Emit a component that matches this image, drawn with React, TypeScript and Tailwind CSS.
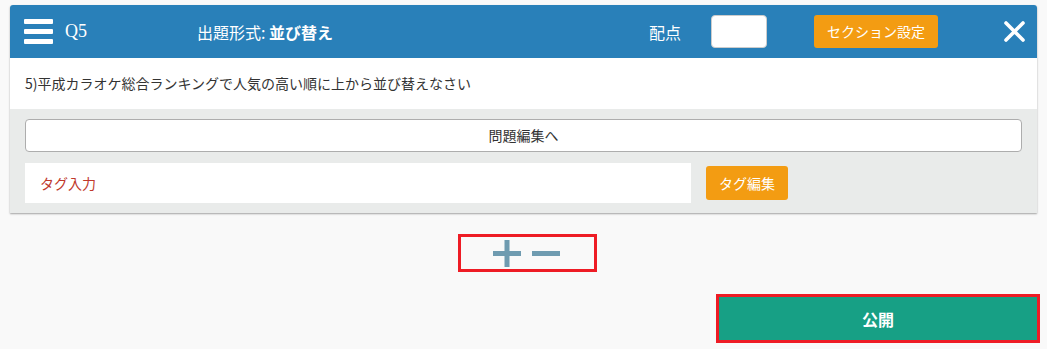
import React from "react";

const jp = "font-['Noto_Sans_CJK_JP','Noto_Sans',sans-serif]";

export default function App() {
  return (
    <div className={`min-h-[349px] w-[1047px] bg-[#f9f9f9] pt-[5px] ${jp}`}>
      <div className="mx-[10px] w-[1027px] bg-white shadow-[0_1px_2px_rgba(0,0,0,0.35)] rounded-t-[3px] overflow-hidden">
        {/* header */}
        <div className="flex h-[53px] items-center bg-[#2980b9] text-white">
          <div className="ml-[14px] flex w-[29px] flex-col gap-[5px]">
            <span className="h-[5px] rounded-[1px] bg-white" />
            <span className="h-[5px] rounded-[1px] bg-white" />
            <span className="h-[5px] rounded-[1px] bg-white" />
          </div>
          <div className="ml-[12px] w-[132px] font-['Liberation_Serif',serif] text-[18px]">Q5</div>
          <div className="w-[452px] text-[16px]">
            出題形式: <span className="font-bold">並び替え</span>
          </div>
          <div className="w-[62px] text-[16px]">配点</div>
          <div className="h-[33px] w-[56px] rounded-[4px] border border-[#ccc] bg-white" />
          <button className="ml-[47px] flex h-[33px] w-[124px] items-center justify-center rounded-[3px] bg-[#f39c12] text-[14px] text-white">
            セクション設定
          </button>
          <div className="ml-[66px] flex h-[21px] w-[21px] items-center justify-center">
            <svg width="21" height="21" viewBox="0 0 21 21">
              <path d="M2 2 L19 19 M19 2 L2 19" stroke="#fff" strokeWidth="3.6" strokeLinecap="round" />
            </svg>
          </div>
        </div>
        {/* question */}
        <div className="flex h-[51px] items-center pl-[15px] text-[14px] text-[#333]">
          5)平成カラオケ総合ランキングで人気の高い順に上から並び替えなさい
        </div>
        {/* gray area */}
        <div className="bg-[#e9ebea] px-[15px] pt-[10px] pb-[10px]">
          <button className="flex h-[33px] w-full items-center justify-center rounded-[4px] border border-[#adadad] bg-white text-[14px] text-[#333]">
            問題編集へ
          </button>
          <div className="mt-[11px] flex h-[40px] items-center">
            <div className="flex h-[40px] w-[666px] items-center bg-white pl-[15px] text-[14px] text-[#c0392b]">
              タグ入力
            </div>
            <button className="ml-[15px] flex h-[34px] w-[82px] items-center justify-center rounded-[3px] bg-[#f39c12] text-[14px] text-white">
              タグ編集
            </button>
          </div>
        </div>
      </div>

      {/* plus / minus */}
      <div className="mt-[21px] flex pl-[458px]">
        <div className="flex h-[38px] w-[139px] items-center border-[3px] border-[#ee1c25]">
          <svg className="ml-[32px]" width="28" height="27" viewBox="0 0 28 27">
            <rect x="0" y="11" width="28" height="5" fill="#6f9bb0" />
            <rect x="11.5" y="0" width="5" height="27" fill="#6f9bb0" />
          </svg>
          <svg className="ml-[11px]" width="28" height="5" viewBox="0 0 28 5">
            <rect x="0" y="0" width="28" height="5" fill="#6f9bb0" />
          </svg>
        </div>
      </div>

      {/* publish */}
      <div className="mt-[22px] flex pl-[716px]">
        <div className="h-[49px] w-[324px] border-[3px] border-[#ee1c25]">
          <button className="flex h-full w-full items-center justify-center bg-[#17a085] text-[16px] font-bold text-white">
            公開
          </button>
        </div>
      </div>
    </div>
  );
}
